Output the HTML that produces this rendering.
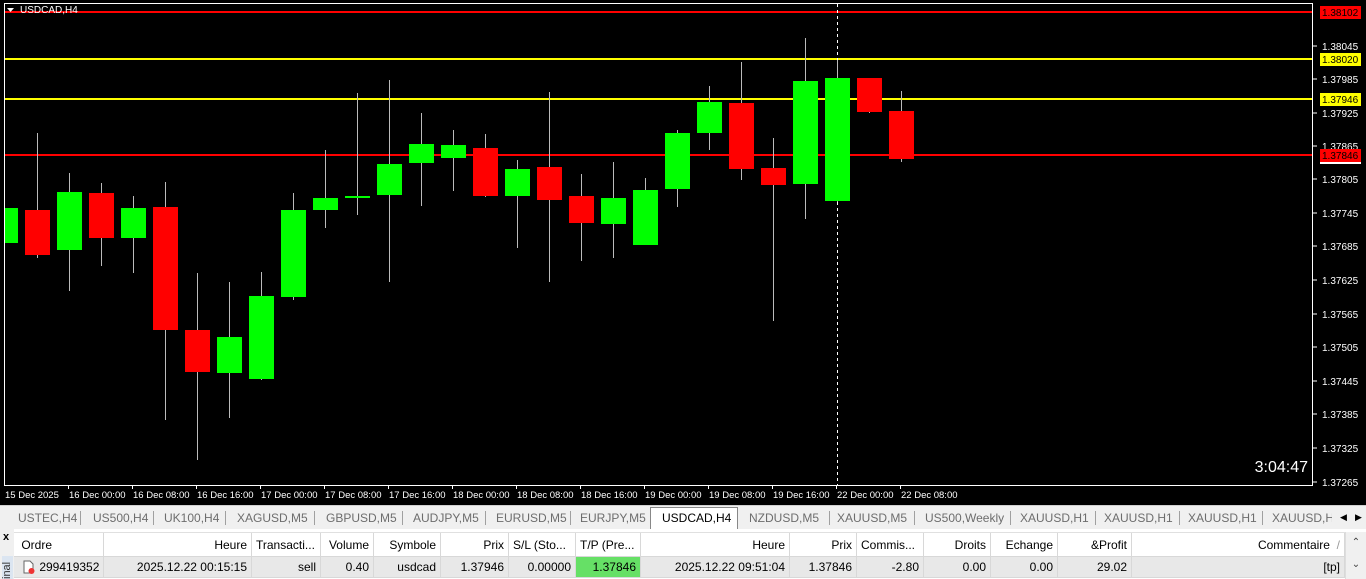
<!DOCTYPE html>
<html><head><meta charset="utf-8"><style>
*{margin:0;padding:0;box-sizing:border-box}
body{width:1366px;height:579px;overflow:hidden;background:#f0f0f0;font-family:"Liberation Sans",sans-serif;position:relative}
.abs{position:absolute}
.tabs{position:absolute;left:0;top:505px;width:1366px;height:24px;background:#f0f0f0;border-top:1px solid #d0d0d0;font-size:12px;color:#6d6d6d}
.tabs span{position:absolute;top:5px}
.sep{position:absolute;top:5px;width:1px;height:14px;background:#a0a0a0}
.tbl{position:absolute;left:14px;top:532px;width:1352px;font-size:12px;color:#000}
.c{position:absolute;height:100%;border-right:1px solid #d8d8d8;padding:0 4px;line-height:24px;white-space:nowrap;overflow:hidden}
</style></head><body>
<svg class="abs" style="left:0;top:0" width="1366" height="505" xmlns="http://www.w3.org/2000/svg" font-family="Liberation Sans, sans-serif" font-size="10">
<rect width="1366" height="505" fill="#000"/>
<rect x="4.5" y="3.5" width="1308" height="482" fill="none" stroke="#fff"/>
<line x1="5" y1="12" x2="1312" y2="12" stroke="#f00" stroke-width="2"/>
<line x1="5" y1="59" x2="1312" y2="59" stroke="#ff0" stroke-width="2"/>
<line x1="5" y1="99" x2="1312" y2="99" stroke="#ff0" stroke-width="2"/>
<line x1="5" y1="155" x2="1312" y2="155" stroke="#f00" stroke-width="2"/>
<line x1="837.5" y1="4" x2="837.5" y2="485" stroke="#fff" stroke-dasharray="3,3"/>
<path d="M7 8h7l-3.5 4z" fill="#fff"/>
<text x="20" y="13" fill="#fff" font-size="10">USDCAD,H4</text>
<g stroke-width="1">
<!-- wicks -->
<g stroke="#bbb">
<line x1="37.5" y1="133" x2="37.5" y2="258"/><line x1="69.5" y1="173" x2="69.5" y2="291"/>
<line x1="101.5" y1="183" x2="101.5" y2="266"/><line x1="133.5" y1="196" x2="133.5" y2="273"/>
<line x1="165.5" y1="182" x2="165.5" y2="420"/><line x1="197.5" y1="273" x2="197.5" y2="460"/>
<line x1="229.5" y1="282" x2="229.5" y2="418"/><line x1="261.5" y1="272" x2="261.5" y2="380"/>
<line x1="293.5" y1="193" x2="293.5" y2="300"/><line x1="325.5" y1="150" x2="325.5" y2="228"/>
<line x1="357.5" y1="93" x2="357.5" y2="215"/><line x1="389.5" y1="80" x2="389.5" y2="282"/>
<line x1="421.5" y1="113" x2="421.5" y2="206"/><line x1="453.5" y1="130" x2="453.5" y2="191"/>
<line x1="485.5" y1="134" x2="485.5" y2="197"/><line x1="517.5" y1="160" x2="517.5" y2="248"/>
<line x1="549.5" y1="92" x2="549.5" y2="282"/><line x1="581.5" y1="174" x2="581.5" y2="261"/>
<line x1="613.5" y1="162" x2="613.5" y2="258"/><line x1="645.5" y1="178" x2="645.5" y2="245"/>
<line x1="677.5" y1="130" x2="677.5" y2="207"/><line x1="709.5" y1="86" x2="709.5" y2="150"/>
<line x1="741.5" y1="62" x2="741.5" y2="180"/><line x1="773.5" y1="138" x2="773.5" y2="321"/>
<line x1="805.5" y1="38" x2="805.5" y2="219"/><line x1="837.5" y1="60" x2="837.5" y2="202"/>
<line x1="869.5" y1="78" x2="869.5" y2="113"/><line x1="901.5" y1="91" x2="901.5" y2="162"/>
</g>
<g fill="#0f0">
<rect x="5" y="208" width="13" height="35"/>
<rect x="57" y="192" width="25" height="58"/>
<rect x="121" y="208" width="25" height="30"/>
<rect x="217" y="337" width="25" height="36"/>
<rect x="249" y="296" width="25" height="83"/>
<rect x="281" y="210" width="25" height="87"/>
<rect x="313" y="198" width="25" height="12"/>
<rect x="345" y="196" width="25" height="2"/>
<rect x="377" y="164" width="25" height="31"/>
<rect x="409" y="144" width="25" height="19"/>
<rect x="441" y="145" width="25" height="13"/>
<rect x="505" y="169" width="25" height="27"/>
<rect x="601" y="198" width="25" height="26"/>
<rect x="633" y="190" width="25" height="55"/>
<rect x="665" y="133" width="25" height="56"/>
<rect x="697" y="102" width="25" height="31"/>
<rect x="793" y="81" width="25" height="103"/>
<rect x="825" y="78" width="25" height="123"/>
</g>
<g fill="#f00">
<rect x="25" y="210" width="25" height="45"/>
<rect x="89" y="193" width="25" height="45"/>
<rect x="153" y="207" width="25" height="123"/>
<rect x="185" y="330" width="25" height="42"/>
<rect x="473" y="148" width="25" height="48"/>
<rect x="537" y="167" width="25" height="33"/>
<rect x="569" y="196" width="25" height="27"/>
<rect x="729" y="103" width="25" height="66"/>
<rect x="761" y="168" width="25" height="17"/>
<rect x="857" y="78" width="25" height="34"/>
<rect x="889" y="111" width="25" height="48"/>
</g>
</g>
<g fill="#fff">
<text x="1322" y="50">1.38045</text><text x="1322" y="83">1.37985</text>
<text x="1322" y="117">1.37925</text><text x="1322" y="150">1.37865</text>
<text x="1322" y="183">1.37805</text><text x="1322" y="217">1.37745</text>
<text x="1322" y="250">1.37685</text><text x="1322" y="284">1.37625</text>
<text x="1322" y="318">1.37565</text><text x="1322" y="351">1.37505</text>
<text x="1322" y="385">1.37445</text><text x="1322" y="418">1.37385</text>
<text x="1322" y="452">1.37325</text><text x="1322" y="486">1.37265</text>
</g>
<g stroke="#fff">
<line x1="1313" y1="46" x2="1317" y2="46"/><line x1="1313" y1="79" x2="1317" y2="79"/>
<line x1="1313" y1="113" x2="1317" y2="113"/><line x1="1313" y1="146" x2="1317" y2="146"/>
<line x1="1313" y1="179" x2="1317" y2="179"/><line x1="1313" y1="213" x2="1317" y2="213"/>
<line x1="1313" y1="246" x2="1317" y2="246"/><line x1="1313" y1="280" x2="1317" y2="280"/>
<line x1="1313" y1="314" x2="1317" y2="314"/><line x1="1313" y1="347" x2="1317" y2="347"/>
<line x1="1313" y1="381" x2="1317" y2="381"/><line x1="1313" y1="414" x2="1317" y2="414"/>
<line x1="1313" y1="448" x2="1317" y2="448"/><line x1="1313" y1="482" x2="1317" y2="482"/>
</g>
<rect x="1320" y="6" width="41" height="13" fill="#f00"/><text x="1322" y="16" fill="#000">1.38102</text>
<rect x="1320" y="53" width="41" height="13" fill="#ff0"/><text x="1322" y="63" fill="#000">1.38020</text>
<rect x="1320" y="93" width="41" height="13" fill="#ff0"/><text x="1322" y="103" fill="#000">1.37946</text>
<rect x="1320" y="149" width="41" height="13" fill="#f00"/><text x="1322" y="159" fill="#000">1.37846</text>
<rect x="1320" y="162" width="41" height="2" fill="#fff"/>
<text x="1308" y="472" fill="#fff" font-size="16" text-anchor="end">3:04:47</text>
<g fill="#fff" font-size="9.5">
<text x="5" y="498">15 Dec 2025</text><text x="69" y="498">16 Dec 00:00</text>
<text x="133" y="498">16 Dec 08:00</text><text x="197" y="498">16 Dec 16:00</text>
<text x="261" y="498">17 Dec 00:00</text><text x="325" y="498">17 Dec 08:00</text>
<text x="389" y="498">17 Dec 16:00</text><text x="453" y="498">18 Dec 00:00</text>
<text x="517" y="498">18 Dec 08:00</text><text x="581" y="498">18 Dec 16:00</text>
<text x="645" y="498">19 Dec 00:00</text><text x="709" y="498">19 Dec 08:00</text>
<text x="773" y="498">19 Dec 16:00</text><text x="837" y="498">22 Dec 00:00</text>
<text x="901" y="498">22 Dec 08:00</text>
</g>
<g stroke="#fff">
<line x1="68.5" y1="485" x2="68.5" y2="489"/><line x1="132.5" y1="485" x2="132.5" y2="489"/>
<line x1="196.5" y1="485" x2="196.5" y2="489"/><line x1="260.5" y1="485" x2="260.5" y2="489"/>
<line x1="324.5" y1="485" x2="324.5" y2="489"/><line x1="388.5" y1="485" x2="388.5" y2="489"/>
<line x1="452.5" y1="485" x2="452.5" y2="489"/><line x1="516.5" y1="485" x2="516.5" y2="489"/>
<line x1="580.5" y1="485" x2="580.5" y2="489"/><line x1="644.5" y1="485" x2="644.5" y2="489"/>
<line x1="708.5" y1="485" x2="708.5" y2="489"/><line x1="772.5" y1="485" x2="772.5" y2="489"/>
<line x1="836.5" y1="485" x2="836.5" y2="489"/><line x1="900.5" y1="485" x2="900.5" y2="489"/>
</g>
</svg>
<div class="tabs">
<span style="left:18px">USTEC,H4</span><div class="sep" style="left:80px"></div>
<span style="left:93px">US500,H4</span><div class="sep" style="left:153px"></div>
<span style="left:164px">UK100,H4</span><div class="sep" style="left:225px"></div>
<span style="left:237px">XAGUSD,M5</span><div class="sep" style="left:314px"></div>
<span style="left:326px">GBPUSD,M5</span><div class="sep" style="left:402px"></div>
<span style="left:413px">AUDJPY,M5</span><div class="sep" style="left:485px"></div>
<span style="left:496px">EURUSD,M5</span><div class="sep" style="left:570px"></div>
<span style="left:580px">EURJPY,M5</span>
<div style="position:absolute;left:650px;top:1px;width:88px;height:22px;background:#fff;border:1px solid #888;border-bottom:none;border-top:1px solid #888"></div>
<span style="left:662px;color:#000">USDCAD,H4</span>
<span style="left:749px">NZDUSD,M5</span><div class="sep" style="left:829px"></div>
<span style="left:837px">XAUUSD,M5</span><div class="sep" style="left:914px"></div>
<span style="left:925px">US500,Weekly</span><div class="sep" style="left:1010px"></div>
<span style="left:1020px">XAUUSD,H1</span><div class="sep" style="left:1095px"></div>
<span style="left:1104px">XAUUSD,H1</span><div class="sep" style="left:1179px"></div>
<span style="left:1188px">XAUUSD,H1</span><div class="sep" style="left:1262px"></div>
<span style="left:1272px;width:60px;overflow:hidden;white-space:nowrap">XAUUSD,H1</span>
<span style="left:1340px;color:#000;font-size:9px;top:6px">◀</span>
<span style="left:1355px;color:#000;font-size:9px;top:6px">▶</span>
</div>
<div class="abs" style="left:0;top:529px;width:1366px;height:50px;background:#fff"></div>
<div class="abs" style="left:0;top:529px;width:14px;height:50px;background:#f0f0f0;font-size:11px;font-weight:bold;padding-left:3px;line-height:16px">x</div>
<div class="abs" style="left:2px;top:556px;width:11px;height:23px;background:#dbe5f1;font-size:11px;color:#333;writing-mode:vertical-rl;transform:rotate(180deg);line-height:11px">inal</div>
<div class="tbl" style="height:25px;top:532px;border-bottom:1px solid #d8d8d8;border-top:1px solid #e0e0e0">
<div class="c" style="left:0;width:90px">&nbsp;Ordre</div>
<div class="c" style="left:90px;width:148px;text-align:right">Heure</div>
<div class="c" style="left:238px;width:69px">Transacti...</div>
<div class="c" style="left:307px;width:53px;text-align:right">Volume</div>
<div class="c" style="left:360px;width:67px;text-align:right">Symbole</div>
<div class="c" style="left:427px;width:68px;text-align:right">Prix</div>
<div class="c" style="left:495px;width:67px">S/L (Sto...</div>
<div class="c" style="left:562px;width:65px">T/P (Pre...</div>
<div class="c" style="left:627px;width:149px;text-align:right">Heure</div>
<div class="c" style="left:776px;width:67px;text-align:right">Prix</div>
<div class="c" style="left:843px;width:67px">Commis...</div>
<div class="c" style="left:910px;width:67px;text-align:right">Droits</div>
<div class="c" style="left:977px;width:67px;text-align:right">Echange</div>
<div class="c" style="left:1044px;width:74px;text-align:right">&amp;Profit</div>
<div class="c" style="left:1118px;width:213px;text-align:right">Commentaire &nbsp;<span style="color:#999">/</span></div>
</div>
<div class="tbl" style="height:21px;top:557px;background:#e8e8e8;border-bottom:1px solid #d8d8d8">
<div class="c" style="left:0;width:90px;line-height:20px"><svg width="14" height="14" style="vertical-align:-3px;margin-left:4px" viewBox="0 0 14 14"><path d="M2 1h6l3 3v9H2z" fill="#fff" stroke="#666"/><circle cx="9.5" cy="11" r="3" fill="#e33"/></svg> 299419352</div>
<div class="c" style="left:90px;width:148px;text-align:right;line-height:20px">2025.12.22 00:15:15</div>
<div class="c" style="left:238px;width:69px;text-align:right;line-height:20px">sell</div>
<div class="c" style="left:307px;width:53px;text-align:right;line-height:20px">0.40</div>
<div class="c" style="left:360px;width:67px;text-align:right;line-height:20px">usdcad</div>
<div class="c" style="left:427px;width:68px;text-align:right;line-height:20px">1.37946</div>
<div class="c" style="left:495px;width:67px;text-align:right;line-height:20px">0.00000</div>
<div class="c" style="left:562px;width:65px;text-align:right;line-height:20px;background:#66e066">1.37846</div>
<div class="c" style="left:627px;width:149px;text-align:right;line-height:20px">2025.12.22 09:51:04</div>
<div class="c" style="left:776px;width:67px;text-align:right;line-height:20px">1.37846</div>
<div class="c" style="left:843px;width:67px;text-align:right;line-height:20px">-2.80</div>
<div class="c" style="left:910px;width:67px;text-align:right;line-height:20px">0.00</div>
<div class="c" style="left:977px;width:67px;text-align:right;line-height:20px">0.00</div>
<div class="c" style="left:1044px;width:74px;text-align:right;line-height:20px">29.02</div>
<div class="c" style="left:1118px;width:213px;text-align:right;line-height:20px">[tp]</div>
</div>
<div class="abs" style="left:1345px;top:532px;width:21px;height:47px;background:#f0f0f0;border-left:1px solid #ddd;font-size:10px;color:#444;text-align:center;line-height:22px">⌃<br>⌄</div>
</body></html>
